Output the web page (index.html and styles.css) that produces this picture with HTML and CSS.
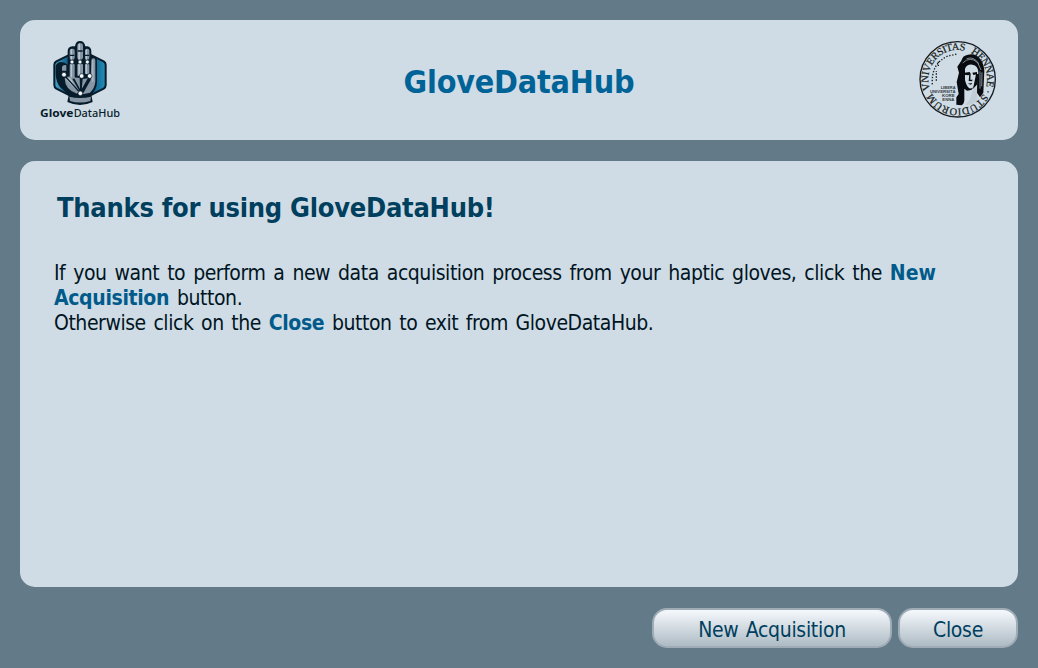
FILE: index.html
```html
<!DOCTYPE html>
<html lang="en">
<head>
<meta charset="utf-8">
<title>GloveDataHub</title>
<link rel="stylesheet" href="styles.css">
</head>
<body>
<div class="window">
<header class="panel header">
<svg class="logo" viewBox="0 0 276 276" role="img" aria-label="GloveDataHub logo">
<defs><linearGradient id="shield"><stop offset="0" stop-color="#45a9c9"/><stop offset=".25" stop-color="#12608b"/><stop offset=".75" stop-color="#0c5c8a"/><stop offset="1" stop-color="#2592b8"/></linearGradient></defs>
<path fill="url(#shield)" stroke="#071c2b" stroke-width="6" stroke-linejoin="round" d="M138 47L209 82q6 4 6 10v62q0 6-6 10l-71 36-71-36q-6-4-6-10V92q0-6 6-10z"/>
<path fill="#071c2b" d="M101 52q0-14 14-15h8q2-16 15-16t16 16h6q12 2 12 16v12q17-1 17 14v66q-1 21-17 37l4 22q-38 18-76 0l4-21-24-22q-14-15-15-41V98q2-14 17-14 9 0 19 8z"/>
<g fill="#8796a4">
<rect x="107" y="44" width="15" height="33" rx="6"/><rect x="130" y="28" width="17" height="49" rx="7"/><rect x="153" y="44" width="13" height="33" rx="6"/>
<rect x="107" y="90" width="15" height="44" rx="3"/><rect x="130" y="90" width="17" height="36" rx="3"/><rect x="153" y="90" width="13" height="30" rx="3"/>
<path d="M172 79q0-6 6-6t6 6v64q-2 20-16 33l-22 5 24-43z"/>
<path d="M84 99q3-8 13-5v16H84z"/>
<path d="M92 133q11-10 21-2l23 39-7 9q-36-11-37-46zM119 130l18 2 1 33zM146 135l17-2-20 34z"/>
<path d="M106 188q32 8 65 0l-2 13q-31 9-61 0z"/>
</g>
<g fill="#bac6cf">
<path d="M110 48q1-3 4-3v32h-4zM133 34q1-6 5-6v49h-5zM155 48q1-3 4-3v32h-4zM110 90h4v40h-4zM133 90h5v33h-5zM155 90h4v30h-4zM175 78h3v65h-3zM95 135q9-7 16-1l17 33q-22-18-33-32z"/>
</g>
<path fill="none" stroke="#071c2b" stroke-width="4" d="M90 123l49 54 4-50M139 177l28-50M108 64h13M131 51h15M153 64h12"/>
<g fill="#f3f7f9" stroke="#071c2b" stroke-width="2">
<circle cx="114" cy="84" r="6"/><circle cx="138" cy="84" r="6"/><circle cx="160" cy="84" r="6"/><circle cx="90" cy="122" r="7"/><circle cx="143" cy="126" r="7"/><circle cx="167" cy="126" r="7"/><circle cx="139" cy="178" r="7"/>
</g>
<g class="logo-name">
<text class="logo-bold" x="18" y="249" textLength="100" lengthAdjust="spacingAndGlyphs">Glove</text>
<text x="119" y="249" textLength="139" lengthAdjust="spacingAndGlyphs">DataHub</text>
</g>
</svg>
<h1 class="title">GloveDataHub</h1>
<svg class="logo" viewBox="0 0 276 276" role="img" aria-label="University seal">
<defs><path id="ring" d="M55.4 169A88 88 0 0 1 218.6 103A88 88 0 0 1 55.4 169"/></defs>
<circle cx="137" cy="136" r="113" fill="none" stroke="#151b20" stroke-width="4"/>
<path fill="none" stroke="#151b20" stroke-width="4" stroke-dasharray="4 5" d="M61 151Q57 88 108 66l28-6M73 140V111M79 96V80"/>
<path fill="#080c10" d="M148 80q4-16 20-18 22-5 36 12 12 15 13 36l-3 66-10 14-9-14 1-62q-3 42-18 54l-13 2-8-6v33q0 12-9 17l-15-2v-22l7-10-6-36 7-28-5-18z"/>
<path fill="#d0dce5" d="M159 104q6-14 22-12 18 2 18 25 0 24-10 37-7 11-17 9-9-7-13-25z"/>
<path fill="#080c10" d="M157 116l16-2 3 5-7 5-12-2zM181 116l14-2v7l-11 2zM172 119h4l-1 18h8l-4 5-9-1zM167 149l14-2-4 5zM192 121l9-2-5 32-13 14z"/>
<path fill="#c2ced7" d="M181 169l13-13 2 46q-17 12-37 11 18-14 22-44z"/>
<path fill="none" stroke="#b9c5ce" stroke-width="2" d="M152 87q22-22 45-1l10 22M164 74q22-8 36 15M204 112v52M210 115l-1 42"/>
<g class="seal-ring">
<text><textPath href="#ring" startOffset="2" textLength="192">VNIVERSITAS</textPath></text>
<text><textPath href="#ring" startOffset="212" textLength="120">HENNAE</textPath></text>
<text><textPath href="#ring" startOffset="339">·</textPath></text>
<text><textPath href="#ring" startOffset="355" textLength="188">STUDIORUM</textPath></text>
</g>
<g class="seal-motto">
<text x="86" y="165" textLength="45" lengthAdjust="spacingAndGlyphs">LIBERA</text>
<text x="54" y="177" textLength="77" lengthAdjust="spacingAndGlyphs">UNIVERSITÀ</text>
<text x="90" y="189" textLength="38" lengthAdjust="spacingAndGlyphs">KORE</text>
<text x="91" y="201" textLength="36" lengthAdjust="spacingAndGlyphs">ENNA</text>
</g>
</svg>
</header>
<main class="panel content">
<h2 class="heading">Thanks for using GloveDataHub!</h2>
<p class="message">If you want to perform a new data acquisition process from your haptic gloves, click the <b class="keep">New</b><br><b>Acquisition</b> button.<br><span class="exit-note">Otherwise click on the <b>Close</b> button to exit from GloveDataHub.</span></p>
</main>
<footer class="actions">
<button class="button button-new" type="button">New Acquisition</button>
<button class="button button-close" type="button">Close</button>
</footer>
</div>
</body>
</html>
```
FILE: styles.css
```css
* { box-sizing: border-box; }
body { margin: 0; background: #637b88; }
.window {
  width: 1038px; height: 668px; padding: 20px; background: #637b88;
  display: flex; flex-direction: column;
  font-family: Tahoma, "DejaVu Sans Condensed", "DejaVu Sans", sans-serif;
  font-stretch: condensed; color: #001523;
}
.panel { background: #d0dce5; border-radius: 15px; }
.header { height: 120px; flex: none; padding: 14px; display: flex; align-items: flex-start; justify-content: space-between; }
.logo { width: 92px; height: 92px; display: block; }
.logo-name { font: 500 34px "Noto Sans", sans-serif; fill: #071c2b; }
.logo-bold { font-weight: 700; }
.seal-ring { font: 31px "Liberation Serif", serif; fill: #151b20; stroke: #151b20; stroke-width: .7px; }
.seal-motto { font: bold 10px "Liberation Sans", sans-serif; fill: #30383e; }
.title { margin: 29px 0 0; font-size: 32px; line-height: 39px; font-weight: bold; color: #006398; letter-spacing: -0.2px; }
.content { height: 426px; flex: none; margin-top: 21px; padding: 31px 34px; }
.heading { margin: 0 0 37px 3px; font-size: 27px; line-height: 32px; font-weight: bold; color: #003f5e; letter-spacing: -0.26px; }
.message { margin: 0; font-size: 21px; line-height: 25px; white-space: nowrap; letter-spacing: -0.45px; word-spacing: 2.4px; }
.message b { color: #005b8b; letter-spacing: -0.35px; }
.message .keep { letter-spacing: 0; }
.exit-note { word-spacing: 2.1px; }
.actions { display: flex; justify-content: flex-end; gap: 6px; margin-top: 21px; }
.button {
  height: 40px; padding: 4px 0 0; border: 2px solid #a0acb5; border-radius: 15px;
  background: linear-gradient(#f5f9fd, #aebbc4); color: #003f5e;
  font: inherit; font-size: 21px; line-height: 25px; letter-spacing: -0.3px; word-spacing: 1.5px;
}
.button-new { width: 240px; }
.button-close { width: 120px; }
```
